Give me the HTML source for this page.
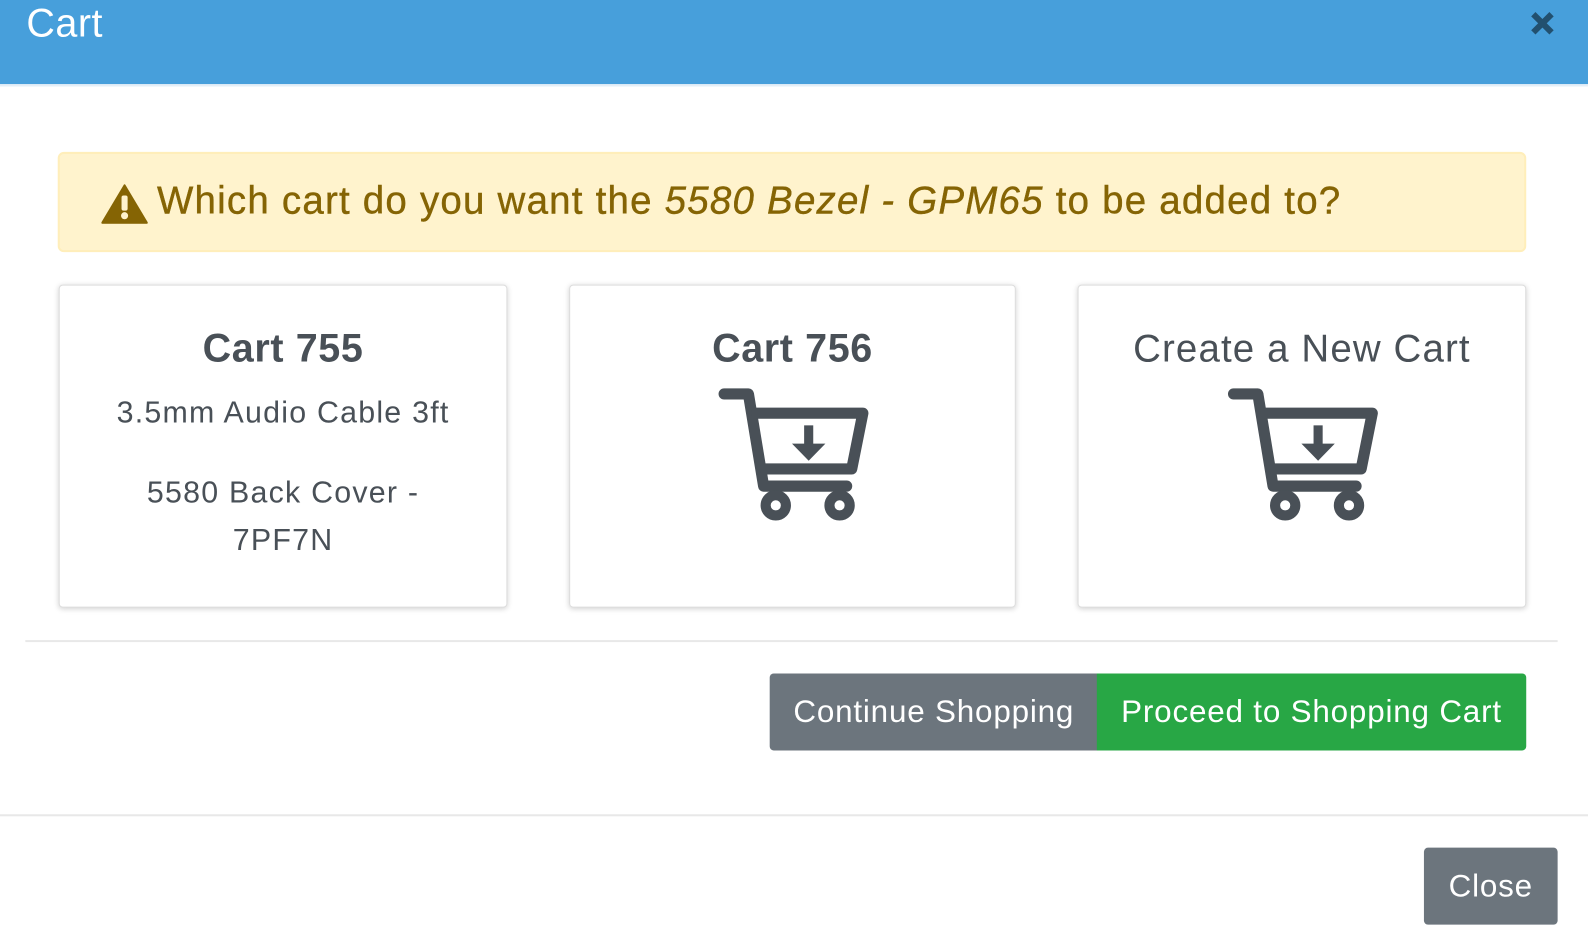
<!DOCTYPE html>
<html><head><meta charset="utf-8"><style>
*{box-sizing:border-box;margin:0;padding:0}
body{width:1588px;height:948px;background:#fff;font-family:"Liberation Sans",sans-serif;color:#495057;overflow:hidden}
#w{position:relative;width:1568px;height:936px;transform:scale(1.01276);transform-origin:0 0}
.hdr{position:absolute;left:0;top:0;width:1568px;height:85px;background:#479fdb;border-bottom:2px solid #e4eef7}
.hdr .t{position:absolute;left:26px;top:2px;font-size:39px;color:#fff;line-height:44px;letter-spacing:0.5px}
.x{position:absolute;left:1510px;top:10px;width:26px;height:26px}
.alert{position:absolute;left:57px;top:150px;width:1450px;height:99px;background:#fff3cd;border:2px solid #ffeeba;border-radius:6px;color:#856404;font-size:38px;line-height:95px;padding-left:96px;white-space:nowrap;letter-spacing:1.2px;-webkit-text-stroke:0.4px #856404}
.alert svg{position:absolute;left:41px;top:29px}
.card{position:absolute;top:281px;height:319px;border:1px solid #ddd;border-radius:4px;box-shadow:0 1px 5px rgba(0,0,0,.18);text-align:center;background:#fff}
.card h3{font-size:39px;font-weight:bold;margin-top:41px;line-height:44px;letter-spacing:0.6px}
.card p{font-size:30px;line-height:47px;letter-spacing:1.2px}
.card svg{position:absolute;top:87px;left:50%;margin-left:-89px}
.hr{position:absolute;left:25px;top:632px;width:1513px;height:2px;background:#e8e8e8}
.btn{position:absolute;top:665px;height:76px;color:#fff;font-size:31px;line-height:76px;text-align:center;letter-spacing:0.8px}
.ft{position:absolute;left:0;top:804px;width:1568px;height:2px;background:#e8e8e8}
</style></head><body><div id="w">
<div class="hdr"><div class="t">Cart</div>
<svg class="x" viewBox="0 0 26 26"><path d="M4 4L22 22M22 4L4 22" stroke="#22506f" stroke-width="6"/></svg></div>
<div class="alert"><svg width="46" height="40" viewBox="0 0 46 40"><path d="M23 2L45 39H1Z" fill="#856404" stroke="#856404" stroke-width="2" stroke-linejoin="round"/><rect x="20" y="12" width="6" height="15" rx="2" fill="#fff3cd"/><circle cx="23" cy="32" r="3.5" fill="#fff3cd"/></svg>Which cart do you want the <i>5580 Bezel - GPM65</i> to be added to?</div>

<div class="card" style="left:58px;width:443px"><h3>Cart 755</h3><p style="margin-top:17px">3.5mm Audio Cable 3ft</p><p style="margin-top:32px">5580 Back Cover -<br>7PF7N</p></div>

<div class="card" style="left:562px;width:441px"><h3>Cart 756</h3>
<svg width="170" height="150" viewBox="0 0 170 150"><g fill="none" stroke="#495057" stroke-width="11" stroke-linecap="round" stroke-linejoin="round"><path d="M21 20H45L60 111H142"/><path d="M53 39H158L147 94H61"/><circle cx="72" cy="130" r="10" stroke-width="10"/><circle cx="135" cy="130" r="10" stroke-width="10"/></g><rect x="100" y="51" width="9" height="22" fill="#495057"/><path d="M88 69H121L104.5 86Z" fill="#495057"/></svg></div>

<div class="card" style="left:1064px;width:443px"><h3 style="font-weight:normal;font-size:38px;letter-spacing:1.1px">Create a New Cart</h3>
<svg width="170" height="150" viewBox="0 0 170 150"><g fill="none" stroke="#495057" stroke-width="11" stroke-linecap="round" stroke-linejoin="round"><path d="M21 20H45L60 111H142"/><path d="M53 39H158L147 94H61"/><circle cx="72" cy="130" r="10" stroke-width="10"/><circle cx="135" cy="130" r="10" stroke-width="10"/></g><rect x="100" y="51" width="9" height="22" fill="#495057"/><path d="M88 69H121L104.5 86Z" fill="#495057"/></svg></div>

<div class="hr"></div>
<div class="btn" style="left:760px;width:324px;background:#6c757d;border-radius:4px 0 0 4px">Continue Shopping</div>
<div class="btn" style="left:1083px;width:424px;background:#28a745;border-radius:0 4px 4px 0">Proceed to Shopping Cart</div>
<div class="ft"></div>
<div class="btn" style="left:1406px;top:837px;width:132px;height:76px;background:#6c757d;border-radius:4px">Close</div>
</div></body></html>
